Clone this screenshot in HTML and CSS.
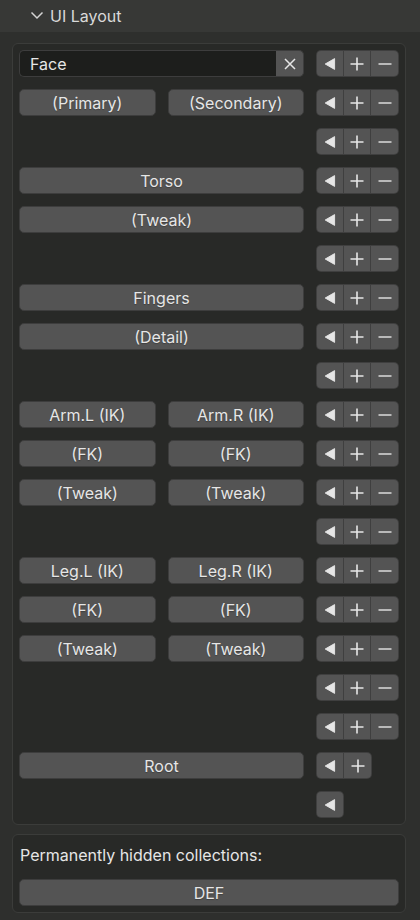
FILE: index.html
```html
<!DOCTYPE html>
<html>
<head>
<meta charset="utf-8">
<link rel="stylesheet" href="styles.css">
</head>
<body>
<svg width="0" height="0" style="position:absolute">
  <defs>
    <symbol id="i-left" viewBox="0 0 12 12"><path d="M1.2 6 L10.6 0.6 L10.6 11.4 Z" fill="#e6e6e6" stroke="#e6e6e6" stroke-width="0.9" stroke-linejoin="round"/></symbol>
    <symbol id="i-plus" viewBox="0 0 14 14"><path d="M7 0.5 V13.5 M0.5 7 H13.5" stroke="#e6e6e6" stroke-width="1.6" fill="none"/></symbol>
    <symbol id="i-minus" viewBox="0 0 14 14"><path d="M0.5 7 H13.5" stroke="#e6e6e6" stroke-width="1.4" fill="none"/></symbol>
    <symbol id="i-x" viewBox="0 0 12 12"><path d="M1 1 L11 11 M11 1 L1 11" stroke="#e6e6e6" stroke-width="1.5" fill="none"/></symbol>
  </defs>
</svg>
<div class="panel">
  <div class="header">
    <svg class="chev" width="14" height="9" viewBox="0 0 14 9"><path d="M1.5 1.5 L7 7 L12.5 1.5" stroke="#d4d4d4" stroke-width="1.5" fill="none"/></svg>
    <span>UI Layout</span>
  </div>
  <div class="body">
    <div class="box">
      <div class="row">
        <div class="field"><div class="input">Face</div><div class="xbtn"><svg width="12" height="12"><use href="#i-x"/></svg></div></div>
        <div class="grp"><b><svg class="tri" width="12" height="12"><use href="#i-left"/></svg></b><b><svg width="14" height="14"><use href="#i-plus"/></svg></b><b><svg width="14" height="14"><use href="#i-minus"/></svg></b></div>
      </div>
      <div class="row">
        <div class="pair"><div class="btn">(Primary)</div><div class="btn">(Secondary)</div></div>
        <div class="grp"><b><svg class="tri" width="12" height="12"><use href="#i-left"/></svg></b><b><svg width="14" height="14"><use href="#i-plus"/></svg></b><b><svg width="14" height="14"><use href="#i-minus"/></svg></b></div>
      </div>
      <div class="row">
        <div></div>
        <div class="grp"><b><svg class="tri" width="12" height="12"><use href="#i-left"/></svg></b><b><svg width="14" height="14"><use href="#i-plus"/></svg></b><b><svg width="14" height="14"><use href="#i-minus"/></svg></b></div>
      </div>
      <div class="row">
        <div class="btn">Torso</div>
        <div class="grp"><b><svg class="tri" width="12" height="12"><use href="#i-left"/></svg></b><b><svg width="14" height="14"><use href="#i-plus"/></svg></b><b><svg width="14" height="14"><use href="#i-minus"/></svg></b></div>
      </div>
      <div class="row">
        <div class="btn">(Tweak)</div>
        <div class="grp"><b><svg class="tri" width="12" height="12"><use href="#i-left"/></svg></b><b><svg width="14" height="14"><use href="#i-plus"/></svg></b><b><svg width="14" height="14"><use href="#i-minus"/></svg></b></div>
      </div>
      <div class="row">
        <div></div>
        <div class="grp"><b><svg class="tri" width="12" height="12"><use href="#i-left"/></svg></b><b><svg width="14" height="14"><use href="#i-plus"/></svg></b><b><svg width="14" height="14"><use href="#i-minus"/></svg></b></div>
      </div>
      <div class="row">
        <div class="btn">Fingers</div>
        <div class="grp"><b><svg class="tri" width="12" height="12"><use href="#i-left"/></svg></b><b><svg width="14" height="14"><use href="#i-plus"/></svg></b><b><svg width="14" height="14"><use href="#i-minus"/></svg></b></div>
      </div>
      <div class="row">
        <div class="btn">(Detail)</div>
        <div class="grp"><b><svg class="tri" width="12" height="12"><use href="#i-left"/></svg></b><b><svg width="14" height="14"><use href="#i-plus"/></svg></b><b><svg width="14" height="14"><use href="#i-minus"/></svg></b></div>
      </div>
      <div class="row">
        <div></div>
        <div class="grp"><b><svg class="tri" width="12" height="12"><use href="#i-left"/></svg></b><b><svg width="14" height="14"><use href="#i-plus"/></svg></b><b><svg width="14" height="14"><use href="#i-minus"/></svg></b></div>
      </div>
      <div class="row">
        <div class="pair"><div class="btn">Arm.L (IK)</div><div class="btn">Arm.R (IK)</div></div>
        <div class="grp"><b><svg class="tri" width="12" height="12"><use href="#i-left"/></svg></b><b><svg width="14" height="14"><use href="#i-plus"/></svg></b><b><svg width="14" height="14"><use href="#i-minus"/></svg></b></div>
      </div>
      <div class="row">
        <div class="pair"><div class="btn">(FK)</div><div class="btn">(FK)</div></div>
        <div class="grp"><b><svg class="tri" width="12" height="12"><use href="#i-left"/></svg></b><b><svg width="14" height="14"><use href="#i-plus"/></svg></b><b><svg width="14" height="14"><use href="#i-minus"/></svg></b></div>
      </div>
      <div class="row">
        <div class="pair"><div class="btn">(Tweak)</div><div class="btn">(Tweak)</div></div>
        <div class="grp"><b><svg class="tri" width="12" height="12"><use href="#i-left"/></svg></b><b><svg width="14" height="14"><use href="#i-plus"/></svg></b><b><svg width="14" height="14"><use href="#i-minus"/></svg></b></div>
      </div>
      <div class="row">
        <div></div>
        <div class="grp"><b><svg class="tri" width="12" height="12"><use href="#i-left"/></svg></b><b><svg width="14" height="14"><use href="#i-plus"/></svg></b><b><svg width="14" height="14"><use href="#i-minus"/></svg></b></div>
      </div>
      <div class="row">
        <div class="pair"><div class="btn">Leg.L (IK)</div><div class="btn">Leg.R (IK)</div></div>
        <div class="grp"><b><svg class="tri" width="12" height="12"><use href="#i-left"/></svg></b><b><svg width="14" height="14"><use href="#i-plus"/></svg></b><b><svg width="14" height="14"><use href="#i-minus"/></svg></b></div>
      </div>
      <div class="row">
        <div class="pair"><div class="btn">(FK)</div><div class="btn">(FK)</div></div>
        <div class="grp"><b><svg class="tri" width="12" height="12"><use href="#i-left"/></svg></b><b><svg width="14" height="14"><use href="#i-plus"/></svg></b><b><svg width="14" height="14"><use href="#i-minus"/></svg></b></div>
      </div>
      <div class="row">
        <div class="pair"><div class="btn">(Tweak)</div><div class="btn">(Tweak)</div></div>
        <div class="grp"><b><svg class="tri" width="12" height="12"><use href="#i-left"/></svg></b><b><svg width="14" height="14"><use href="#i-plus"/></svg></b><b><svg width="14" height="14"><use href="#i-minus"/></svg></b></div>
      </div>
      <div class="row">
        <div></div>
        <div class="grp"><b><svg class="tri" width="12" height="12"><use href="#i-left"/></svg></b><b><svg width="14" height="14"><use href="#i-plus"/></svg></b><b><svg width="14" height="14"><use href="#i-minus"/></svg></b></div>
      </div>
      <div class="row">
        <div></div>
        <div class="grp"><b><svg class="tri" width="12" height="12"><use href="#i-left"/></svg></b><b><svg width="14" height="14"><use href="#i-plus"/></svg></b><b><svg width="14" height="14"><use href="#i-minus"/></svg></b></div>
      </div>
      <div class="row">
        <div class="btn">Root</div>
        <div class="grp"><b><svg class="tri" width="12" height="12"><use href="#i-left"/></svg></b><b><svg width="14" height="14"><use href="#i-plus"/></svg></b></div>
      </div>
      <div class="row">
        <div></div>
        <div class="grp"><b><svg class="tri" width="12" height="12"><use href="#i-left"/></svg></b></div>
      </div>
    </div>
    <div class="box box2">
      <div class="label">Permanently hidden collections:</div>
      <div class="btn">DEF</div>
    </div>
  </div>
</div>
</body>
</html>
```
FILE: styles.css
```css
* { box-sizing: border-box; }
html, body {
  margin: 0;
  padding: 0;
  background: #2e2f2d;
  width: 420px;
  height: 920px;
  overflow: hidden;
}
body {
  font-family: Inter, "Noto Sans", "DejaVu Sans", sans-serif;
  font-size: 16px;
  color: #e6e6e6;
}
.panel {
  width: 420px;
}
.header {
  height: 32px;
  background: #373836;
  display: flex;
  align-items: center;
  padding-left: 30px;
  gap: 6px;
  color: #d9d9d9;
}
.header .chev { margin-top: -2px; }
.header span { line-height: 1; margin-top: -1px; }
.body {
  padding: 11px 14px 0 12px;
  display: flex;
  flex-direction: column;
  gap: 9px;
}
.box {
  border: 1px solid #3b3c3a;
  border-radius: 6px;
  background: #282927;
  padding: 6px;
  display: flex;
  flex-direction: column;
  gap: 12px;
}
.row {
  display: grid;
  grid-template-columns: 285px 83px;
  column-gap: 12px;
  height: 27px;
}
.pair {
  display: grid;
  grid-template-columns: 1fr 1fr;
  column-gap: 12px;
}
.btn {
  height: 27px;
  background: #545454;
  border: 1px solid #3d3d3d;
  border-radius: 5px;
  display: flex;
  align-items: center;
  justify-content: center;
  color: #e6e6e6;
  white-space: nowrap;
  text-shadow: 0 1px 1px rgba(0,0,0,0.25);
}
.field {
  display: flex;
  height: 27px;
}
.input {
  flex: 1;
  background: #1d1e1c;
  border: 1px solid #3d3d3d;
  border-right: none;
  border-radius: 5px 0 0 5px;
  display: flex;
  align-items: center;
  padding-left: 10px;
  color: #e6e6e6;
}
.xbtn {
  width: 28px;
  background: #545454;
  border: 1px solid #3d3d3d;
  border-left: none;
  border-radius: 0 5px 5px 0;
  display: flex;
  align-items: center;
  justify-content: center;
}
.grp {
  display: flex;
  justify-self: start;
  height: 27px;
  background: #3f3f3f;
  border-radius: 5px;
  padding: 1px;
  gap: 1px;
}
.grp b {
  width: 26px;
  background: #545454;
  display: flex;
  align-items: center;
  justify-content: center;
}
.grp b:last-child { width: 27px; }
.grp b:first-child { border-top-left-radius: 4px; border-bottom-left-radius: 4px; }
.grp b:last-child { border-top-right-radius: 4px; border-bottom-right-radius: 4px; }
.grp b:only-child { width: 26px; }
.grp .tri { margin-left: -1px; }
.box2 {
  gap: 11px;
}
.label {
  height: 27px;
  display: flex;
  align-items: center;
  padding-left: 1px;
  color: #e6e6e6;
}
```
